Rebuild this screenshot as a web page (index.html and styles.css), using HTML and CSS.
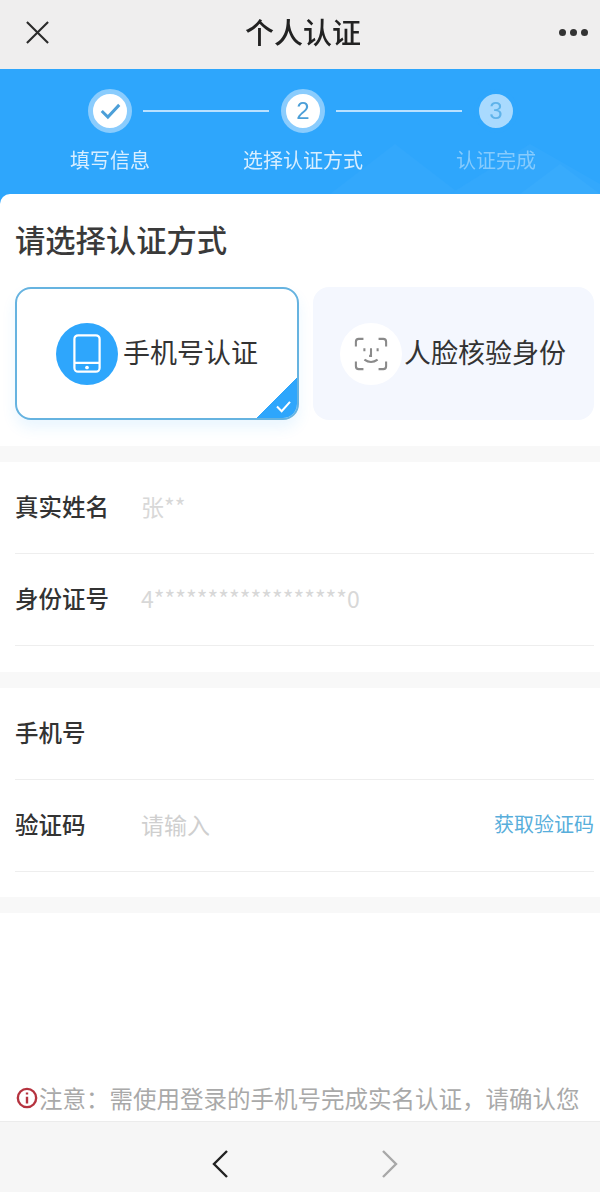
FILE: index.html
```html
<!DOCTYPE html>
<html lang="zh-CN">
<head>
<meta charset="utf-8">
<title>个人认证</title>
<link rel="stylesheet" href="styles.css">
</head>
<body>
<div class="page">
  <header class="topbar">
    <svg class="close" viewBox="0 0 26 26"><path d="M2 2 24 24M24 2 2 24"/></svg>
    <h1 class="title">个人认证</h1>
    <div class="dots"><i></i><i></i><i></i></div>
  </header>
  <section class="hero">
    <svg class="hero-bg" viewBox="0 0 600 125" preserveAspectRatio="none">
      <path class="d1" d="M330 125 395 75 460 125Z"/>
      <path class="d1" d="M450 125 530 75 600 115V125Z"/>
      <path class="d2" d="M520 125 560 95 600 125Z"/>
    </svg>
    <div class="steps">
      <div class="step done">
        <div class="dot"><svg class="tick" viewBox="0 0 24 20"><path d="M2 10 9 17 22 3"/></svg></div>
        <span class="step-label">填写信息</span>
      </div>
      <div class="link"></div>
      <div class="step now">
        <div class="dot">2</div>
        <span class="step-label">选择认证方式</span>
      </div>
      <div class="link"></div>
      <div class="step todo">
        <div class="dot">3</div>
        <span class="step-label">认证完成</span>
      </div>
    </div>
  </section>
  <main class="sheet">
    <section class="methods">
      <h2 class="methods-title">请选择认证方式</h2>
      <div class="method-row">
        <div class="method active">
          <span class="badge blue">
            <svg viewBox="0 0 30 42"><rect class="ph" x="1.5" y="1.5" width="27" height="39" rx="4"/><path class="ph" d="M1.5 31H28.5"/><circle class="phd" cx="15" cy="36" r="2"/></svg>
          </span>
          <span class="method-name">手机号认证</span>
          <span class="corner"><svg viewBox="0 0 18 14"><path d="M2 7 7 12 16 2"/></svg></span>
        </div>
        <div class="method">
          <span class="badge white">
            <svg viewBox="0 0 36 36"><path class="fc" d="M2 10V5Q2 2 5 2H10M26 2H31Q34 2 34 5V10M34 26V31Q34 34 31 34H26M10 34H5Q2 34 2 31V26M11 12V15M25 12V15M18 12V20H16M11 24Q18 29 25 24"/></svg>
          </span>
          <span class="method-name">人脸核验身份</span>
        </div>
      </div>
    </section>
    <section class="group group-id">
      <div class="row"><span class="label">真实姓名</span><span class="value">张**</span></div>
      <div class="row"><span class="label">身份证号</span><span class="value">4******************0</span></div>
    </section>
    <section class="group">
      <div class="row"><span class="label">手机号</span></div>
      <div class="row"><span class="label">验证码</span><span class="value hint">请输入</span><span class="get-code">获取验证码</span></div>
    </section>
    <div class="band"></div>
    <p class="note"><svg class="info" viewBox="0 0 24 24"><circle cx="12" cy="12" r="10"/><path d="M12 10.5V18M12 6V8.2"/></svg>注意&#xFF1A;需使用登录的手机号完成实名认证&#xFF0C;请确认您</p>
  </main>
  <footer class="navbar">
    <svg class="chev" viewBox="0 0 18 30"><path d="M16 2 3 15 16 28"/></svg>
    <svg class="chev off" viewBox="0 0 18 30"><path d="M2 2 15 15 2 28"/></svg>
  </footer>
</div>
</body>
</html>
```
FILE: styles.css
```css
* { box-sizing: border-box; margin: 0; padding: 0; }
html, body { height: 100%; }
body {
  font-family: "Noto Sans CJK SC", "Liberation Sans", sans-serif;
  background: #fff;
  color: #333;
}
.page {
  width: 600px;
  height: 1192px;
  display: flex;
  flex-direction: column;
  overflow: hidden;
  filter: blur(0.5px);
}
.topbar {
  height: 69px;
  flex: none;
  background: #efeeee;
  display: grid;
  grid-template-columns: 1fr auto 1fr;
  align-items: center;
  padding: 0 12px 4px 18px;
}
.close { width: 25px; height: 25px; margin-left: 7px; fill: none; stroke: #2b2b2b; stroke-width: 2.2; }
.title { font-size: 29px; font-weight: 500; color: #222; line-height: 40px; margin-bottom: 4px; }
.dots { justify-self: end; display: flex; gap: 4px; }
.dots i { width: 7px; height: 7px; border-radius: 50%; background: #333; }
.hero {
  position: relative;
  height: 140px;
  flex: none;
  background: #2ea6fc;
  padding: 20px 64px 0 70px;
}
.hero-bg { position: absolute; left: 0; top: 0; width: 600px; height: 125px; }
.d1 { fill: #33a8fc; }
.d2 { fill: #38abfc; }
.steps {
  position: relative;
  display: flex;
  align-items: flex-start;
}
.step {
  width: 80px;
  flex: none;
  display: flex;
  flex-direction: column;
  align-items: center;
  white-space: nowrap;
}
.dot {
  width: 44px;
  height: 44px;
  border-radius: 50%;
  display: flex;
  align-items: center;
  justify-content: center;
  font: 24px "Liberation Sans", sans-serif;
}
.done .dot, .now .dot {
  background: #fff;
  color: #4c9fd8;
  border: 5px solid #8accfd;
}
.todo .dot {
  background: #a9dafe;
  color: #5fb3ea;
  border: 5px solid #2ea6fc;
}
.tick { width: 21px; height: 18px; fill: none; stroke: #4c9fd8; stroke-width: 3.4; }
.step-label { margin-top: 12px; font-size: 20px; line-height: 30px; color: #d8eeff; }
.todo .step-label { color: #86cbfd; }
.link {
  width: 126px;
  height: 2px;
  margin: 21px 0 0;
  background: #b9e1ff;
  flex: none;
}
.step + .link { margin-left: -7px; margin-right: -6px; }
.sheet {
  flex: 1;
  min-height: 0;
  margin-top: -15px;
  position: relative;
  background: #fff;
  border-radius: 10px 0 0 0;
  display: flex;
  flex-direction: column;
}
.methods { height: 252px; padding: 24px 6px 0 15px; flex: none; }
.methods-title { font-size: 30.3px; font-weight: 500; line-height: 42px; color: #3a3a3a; }
.method-row {
  margin-top: 27px;
  display: grid;
  grid-template-columns: 284px 281px;
  gap: 14px;
}
.method {
  position: relative;
  height: 133px;
  border-radius: 16px;
  background: #f4f7fe;
  display: flex;
  align-items: center;
  padding-left: 27px;
  gap: 2px;
  overflow: hidden;
}
.method.active {
  background: #fff;
  border: 2px solid #66b3e0;
  padding-left: 39px;
  gap: 5px;
  box-shadow: 0 8px 14px rgba(46, 166, 252, .1);
}
.method-name { font-size: 27px; line-height: 38px; padding-bottom: 4px; color: #333; white-space: nowrap; }
.badge {
  width: 62px;
  height: 62px;
  border-radius: 50%;
  flex: none;
  display: flex;
  align-items: center;
  justify-content: center;
}
.badge.blue { background: #2ea6fc; }
.badge.white { background: #fff; }
.badge.blue svg { width: 28px; height: 41px; }
.badge.white svg { width: 34px; height: 36px; }
.ph { fill: none; stroke: #fff; stroke-width: 2.4; }
.phd { fill: #fff; }
.fc { fill: none; stroke: #8a8a8a; stroke-width: 2.2; }
.corner {
  position: absolute;
  right: -2px;
  bottom: -2px;
  width: 44px;
  height: 44px;
  background: linear-gradient(135deg, transparent 50%, #2ea6fc 50%);
  display: flex;
  align-items: flex-end;
  justify-content: flex-end;
  padding: 0 7px 7px 0;
}
.corner svg { width: 17px; height: 13px; fill: none; stroke: #fff; stroke-width: 2.2; }
.group {
  flex: none;
  border-top: 16px solid #f8f8f8;
  padding: 0 6px 25px 15px;
}
.group-id { padding-bottom: 26px; }
.row {
  height: 92px;
  display: flex;
  align-items: center;
  padding-bottom: 4px;
  border-bottom: 1px solid #eeeeee;
}
.label { width: 126px; flex: none; font-size: 23.5px; font-weight: 500; color: #333; }
.value { font-size: 23px; color: #d8d8d8; }
.hint { color: #cfcfcf; }
.get-code { margin-left: auto; font-size: 20px; color: #58aedb; }
.band { height: 16px; flex: none; background: #f8f8f8; }
.note {
  margin-top: auto;
  height: 40px;
  padding-left: 16px;
  display: flex;
  align-items: flex-start;
  white-space: nowrap;
  font-size: 23.5px;
  line-height: 34px;
  color: #a9a9a9;
}
.info { width: 22px; height: 22px; margin: 6px 1px 0 0; flex: none; fill: none; stroke: #b5333f; stroke-width: 2.6; }
.navbar {
  height: 71px;
  flex: none;
  background: #f6f6f6;
  border-top: 1px solid #ececec;
  display: flex;
  justify-content: center;
  align-items: center;
  gap: 152px;
  padding: 14px 0 0 10px;
}
.chev { width: 18px; height: 30px; fill: none; stroke: #222; stroke-width: 2.4; }
.chev.off { stroke: #a8a8a8; }
```
